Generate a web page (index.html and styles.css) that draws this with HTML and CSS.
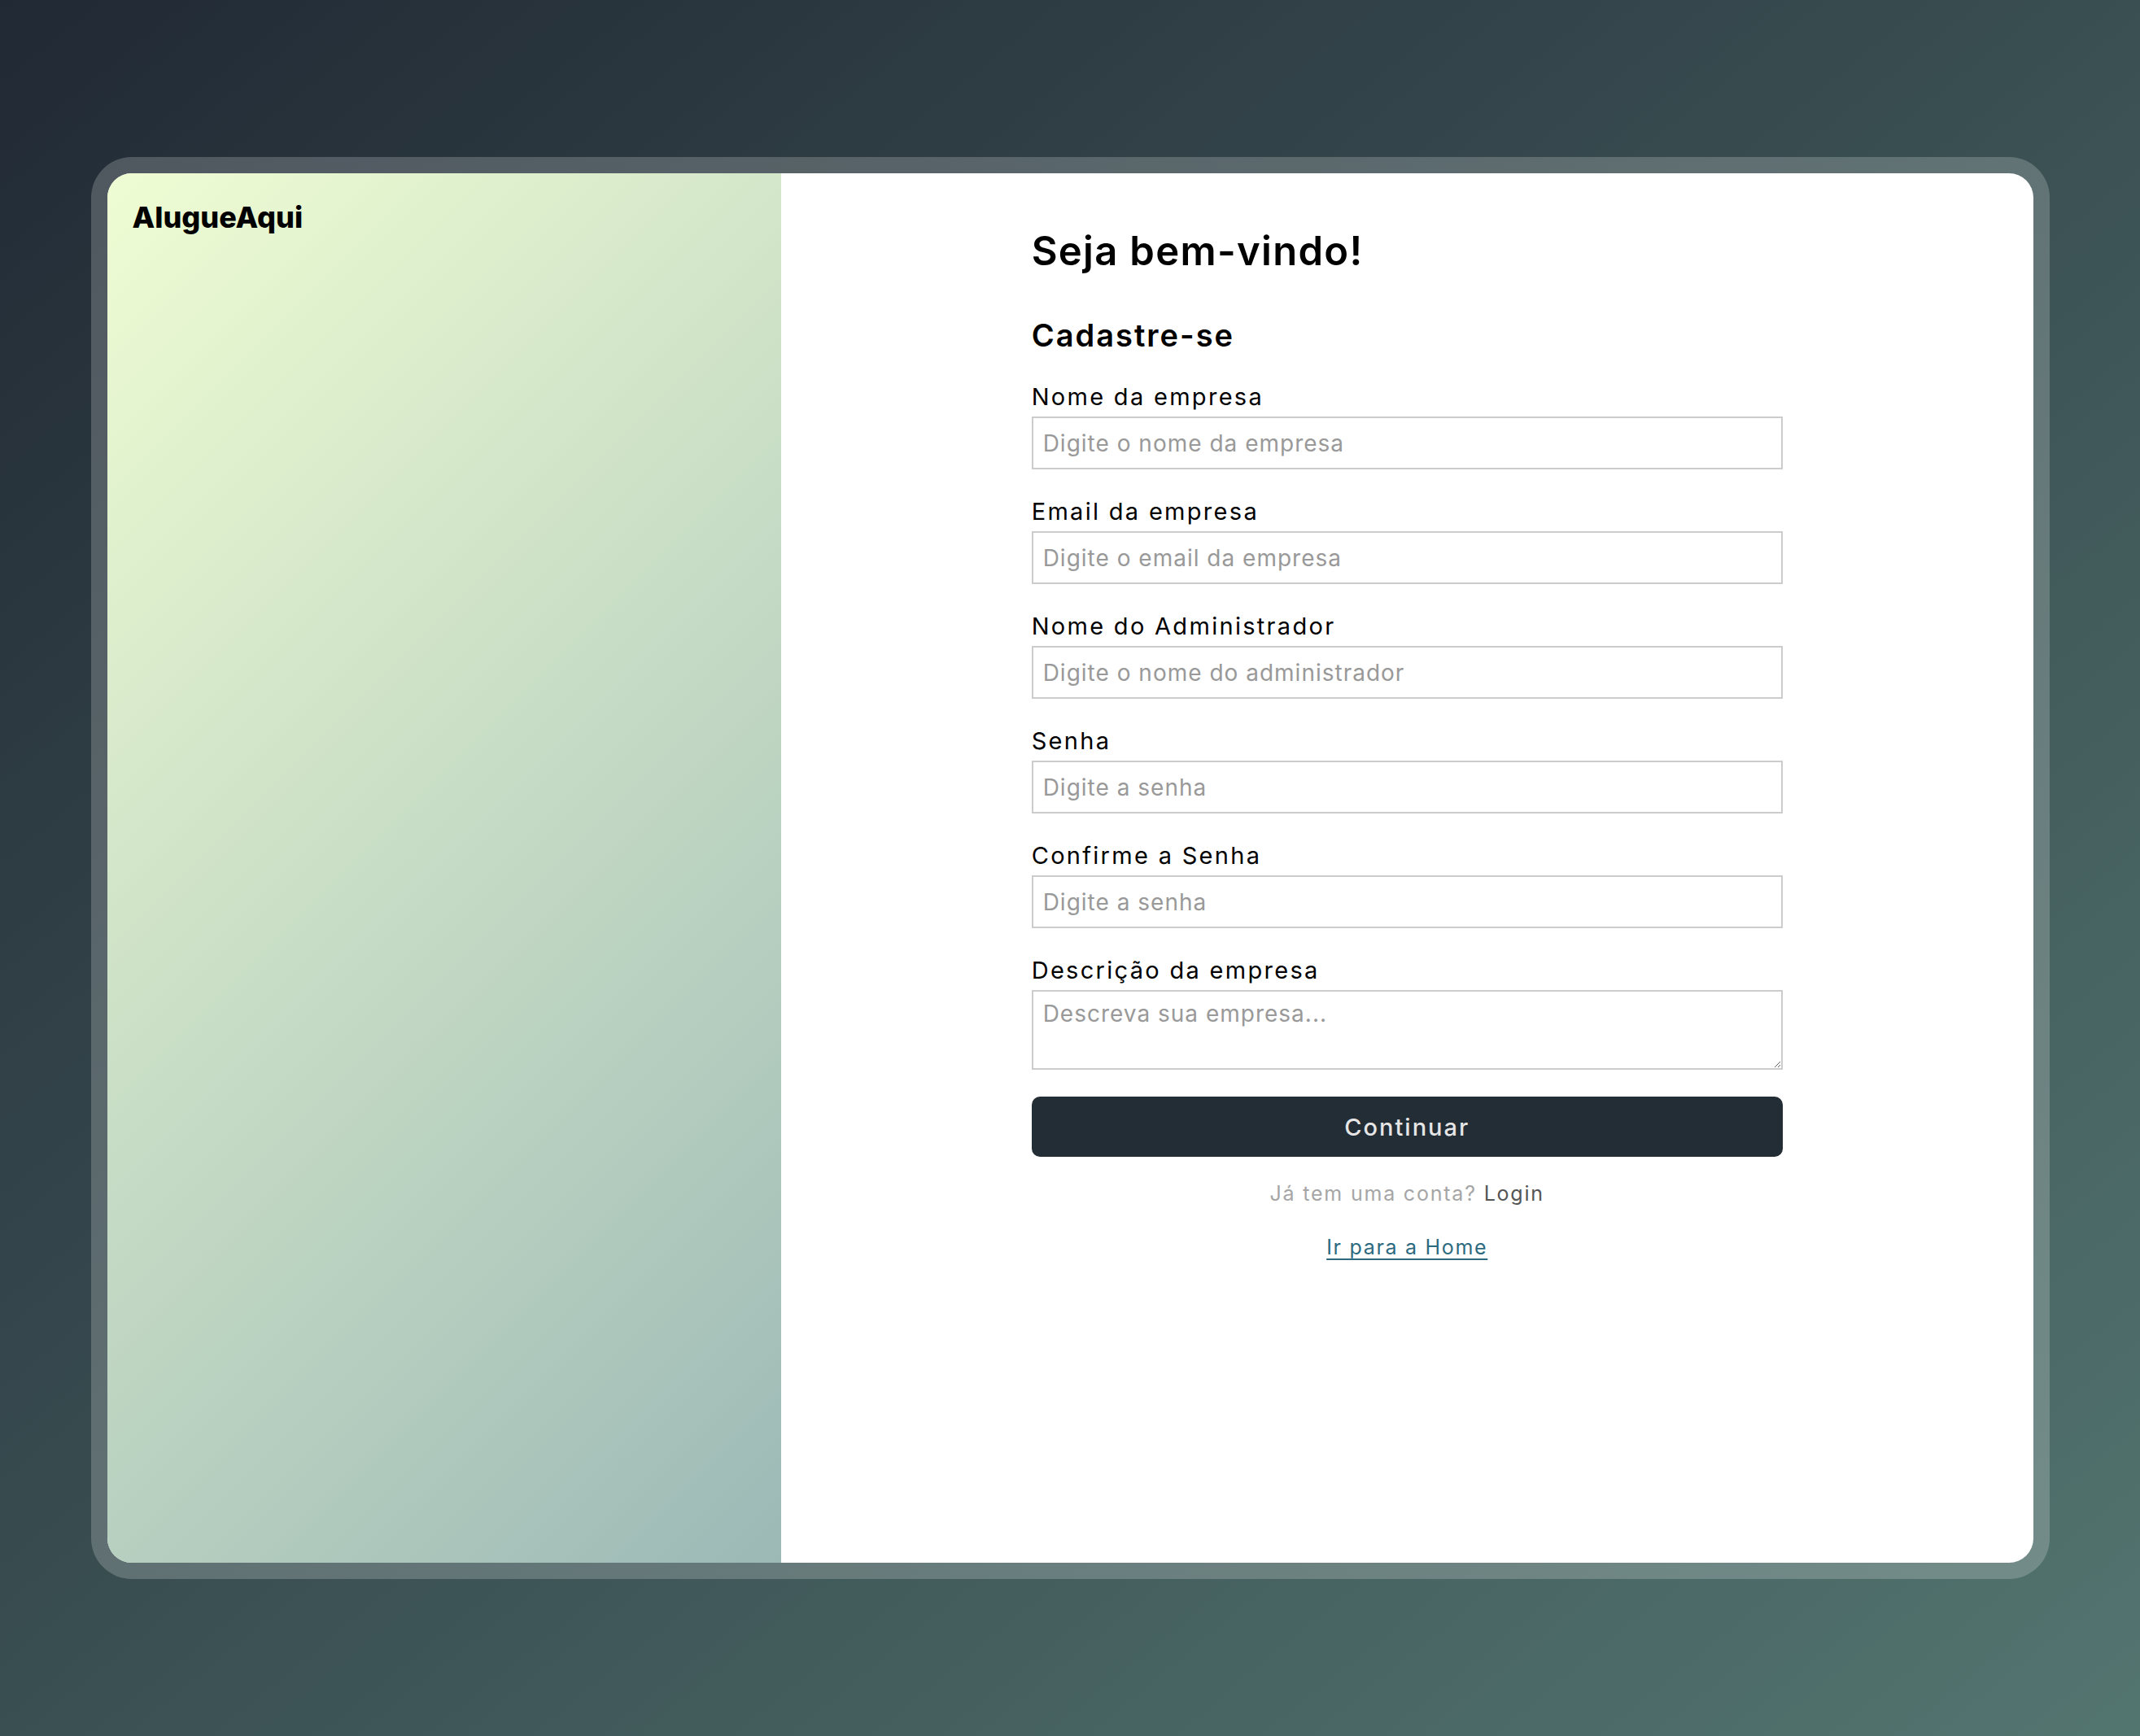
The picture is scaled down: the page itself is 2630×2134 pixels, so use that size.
FILE: index.html
```html
<!DOCTYPE html>
<html lang="pt-BR">
<head>
<meta charset="utf-8">
<title>AlugueAqui - Cadastro</title>
<link rel="stylesheet" href="styles.css">
</head>
<body>
<main class="page">
  <div class="frame">
    <div class="card">
      <aside class="brand-panel">
        <div class="logo">AlugueAqui</div>
      </aside>
      <section class="form-panel">
        <form class="signup">
          <h1 class="title">Seja bem-vindo!</h1>
          <h2 class="subtitle">Cadastre-se</h2>
          <div class="field">
            <label class="label" for="empresa">Nome da empresa</label>
            <input class="input" id="empresa" type="text" placeholder="Digite o nome da empresa">
          </div>
          <div class="field">
            <label class="label" for="email">Email da empresa</label>
            <input class="input" id="email" type="email" placeholder="Digite o email da empresa">
          </div>
          <div class="field">
            <label class="label" for="admin">Nome do Administrador</label>
            <input class="input" id="admin" type="text" placeholder="Digite o nome do administrador">
          </div>
          <div class="field">
            <label class="label" for="senha">Senha</label>
            <input class="input" id="senha" type="password" placeholder="Digite a senha">
          </div>
          <div class="field">
            <label class="label" for="confirma">Confirme a Senha</label>
            <input class="input" id="confirma" type="password" placeholder="Digite a senha">
          </div>
          <div class="field field-last">
            <label class="label" for="descricao">Descrição da empresa</label>
            <textarea class="input textarea" id="descricao" placeholder="Descreva sua empresa..."></textarea>
          </div>
          <button class="btn" type="button">Continuar</button>
          <p class="login">Já tem uma conta? <a class="login-link" href="#">Login</a></p>
          <p class="home"><a class="home-link" href="#">Ir para a Home</a></p>
        </form>
      </section>
    </div>
  </div>
</main>
</body>
</html>
```

FILE: styles.css
```css
* {
  box-sizing: border-box;
}

html,
body {
  margin: 0;
  height: 100%;
}

body {
  font-family: "Inter", "Liberation Sans", sans-serif;
  background: linear-gradient(to bottom right, #212934, #537570);
  color: #000;
}

.page {
  height: 100vh;
  display: flex;
  align-items: center;
  justify-content: center;
}

.frame {
  padding: 20px;
  background: rgba(255, 255, 255, 0.2);
  border-radius: 50px;
}

.card {
  width: 90vw;
  height: 80vh;
  border-radius: 30px;
  overflow: hidden;
  display: flex;
  background: #fff;
}

.brand-panel {
  width: 35%;
  background: linear-gradient(135deg, #effdd3, #9cb9b6);
  padding: 32px 31px;
}

.logo {
  font-size: 36px;
  font-weight: 800;
  line-height: 44px;
}

.form-panel {
  flex: 1;
  display: flex;
  justify-content: center;
  padding-top: 67px;
}

.signup {
  width: 60%;
}

.title {
  font-size: 49px;
  font-weight: 600;
  line-height: 58px;
  letter-spacing: 1.3px;
  margin: 0 0 52px;
}

.subtitle {
  font-size: 38px;
  font-weight: 600;
  line-height: 44px;
  letter-spacing: 2px;
  margin: 0 0 36px;
}

.field {
  margin-bottom: 34px;
}

.field-last {
  margin-bottom: 33px;
}

.label {
  display: block;
  font-size: 29px;
  line-height: 36px;
  letter-spacing: 2.3px;
  margin-bottom: 6px;
}

.input {
  display: block;
  width: 100%;
  height: 65px;
  margin: 0;
  border: 2px solid #cccccc;
  border-radius: 0;
  padding: 0 12px;
  font-family: inherit;
  font-size: 28px;
  letter-spacing: 1px;
  color: #000;
  background: #fff;
}

.input::placeholder {
  color: #999999;
}

.textarea {
  height: 98px;
  padding: 10px 12px;
  line-height: 34px;
  resize: vertical;
}

.btn {
  display: block;
  width: 100%;
  height: 74px;
  border: none;
  border-radius: 10px;
  background: #232d36;
  color: #e6e6e6;
  font-family: inherit;
  font-size: 29px;
  font-weight: 500;
  letter-spacing: 2px;
}

.login {
  margin: 30px 0 0;
  text-align: center;
  font-size: 25px;
  line-height: 30px;
  letter-spacing: 1.8px;
  color: #a6a6a6;
}

.login-link {
  color: #555555;
  text-decoration: none;
}

.home {
  margin: 36px 0 0;
  text-align: center;
  font-size: 25px;
  line-height: 30px;
  letter-spacing: 1.7px;
}

.home-link {
  color: #2d6a7f;
  text-decoration: underline;
  text-decoration-thickness: 2px;
  text-underline-offset: 5px;
}
```
